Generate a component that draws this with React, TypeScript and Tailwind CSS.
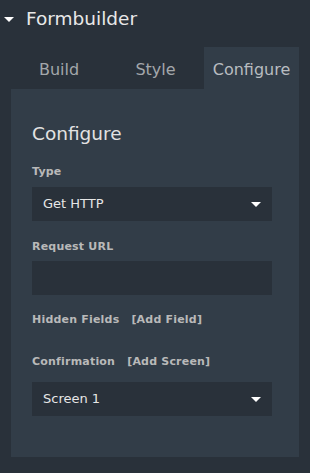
function Caret({ className }: { className?: string }) {
  return (
    <svg width="10" height="5" viewBox="0 0 10 5" className={className}>
      <path d="M0 0h10L5 5z" fill="currentColor" />
    </svg>
  );
}

function SelectBox({ value }: { value: string }) {
  return (
    <div className="flex h-[34px] items-center justify-between bg-[#29313a] px-[11px] text-[13px] text-[#e6e6e6]">
      <span>{value}</span>
      <Caret className="text-white" />
    </div>
  );
}

const label = "text-[11px] font-bold leading-[14px] tracking-[0.2px] text-[#b9b9b9]";

export default function App() {
  return (
    <div
      className="h-[473px] w-[310px] overflow-hidden bg-[#29313a] text-[#ddd]"
      style={{ fontFamily: '"DejaVu Sans", "Open Sans", sans-serif' }}
    >
      <div className="flex h-[37px] items-center gap-[12px] pl-[4px] pt-[1px]">
        <Caret className="text-white" />
        <span className="text-[18.5px] text-[#e8e8e8]">Formbuilder</span>
      </div>

      <div className="mx-[11px] mt-[10px] flex h-[42px] text-[16px] text-[#a3a7ab]">
        <div className="flex w-[96px] items-center justify-center pt-[3px]">Build</div>
        <div className="flex w-[97px] items-center justify-center pt-[3px]">Style</div>
        <div className="flex flex-1 items-center justify-center bg-[#323d48] pt-[3px] text-[#b8bcc0]">Configure</div>
      </div>

      <div className="mx-[11px] h-[368px] bg-[#323d48] px-[21px] pt-[33px]">
        <h1 className="text-[18.5px] leading-[24px] text-[#e2e2e2]">Configure</h1>

        <div className={`mt-[19px] ${label}`}>Type</div>
        <div className="mr-[6px] mt-[8px]">
          <SelectBox value="Get HTTP" />
        </div>

        <div className={`mt-[19px] ${label}`}>Request URL</div>
        <div className="mr-[6px] mt-[7px] h-[34px] bg-[#29313a]" />

        <div className={`mt-[18px] flex gap-[12px] ${label}`}>
          <span>Hidden Fields</span>
          <span>[Add Field]</span>
        </div>

        <div className={`mt-[28px] flex gap-[12px] ${label}`}>
          <span>Confirmation</span>
          <span>[Add Screen]</span>
        </div>
        <div className="mr-[6px] mt-[13px]">
          <SelectBox value="Screen 1" />
        </div>
      </div>
    </div>
  );
}
